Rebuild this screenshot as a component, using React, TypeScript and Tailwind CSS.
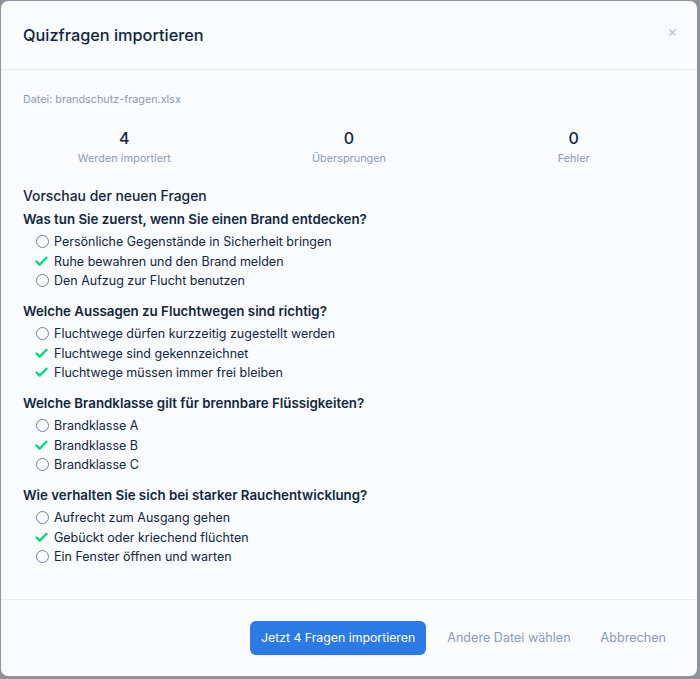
import { Check, X } from "lucide-react";

type Answer = { text: string; correct: boolean };
type Question = { title: string; answers: Answer[] };

const questions: Question[] = [
    {
        title: "Was tun Sie zuerst, wenn Sie einen Brand entdecken?",
        answers: [
            { text: "Persönliche Gegenstände in Sicherheit bringen", correct: false },
            { text: "Ruhe bewahren und den Brand melden", correct: true },
            { text: "Den Aufzug zur Flucht benutzen", correct: false },
        ],
    },
    {
        title: "Welche Aussagen zu Fluchtwegen sind richtig?",
        answers: [
            { text: "Fluchtwege dürfen kurzzeitig zugestellt werden", correct: false },
            { text: "Fluchtwege sind gekennzeichnet", correct: true },
            { text: "Fluchtwege müssen immer frei bleiben", correct: true },
        ],
    },
    {
        title: "Welche Brandklasse gilt für brennbare Flüssigkeiten?",
        answers: [
            { text: "Brandklasse A", correct: false },
            { text: "Brandklasse B", correct: true },
            { text: "Brandklasse C", correct: false },
        ],
    },
    {
        title: "Wie verhalten Sie sich bei starker Rauchentwicklung?",
        answers: [
            { text: "Aufrecht zum Ausgang gehen", correct: false },
            { text: "Gebückt oder kriechend flüchten", correct: true },
            { text: "Ein Fenster öffnen und warten", correct: false },
        ],
    },
];

const stats = [
    { value: 4, label: "Werden importiert" },
    { value: 0, label: "Übersprungen" },
    { value: 0, label: "Fehler" },
];

function AnswerRow({ answer }: { answer: Answer }) {
    return (
        <div className="flex items-center leading-[19.5px] text-[12.5px]">
            <div className="w-[31px] flex justify-end pr-[5px]">
                {answer.correct ? (
                    <Check className="w-[15px] h-[15px] text-[#00d97e]" strokeWidth={3.75} />
                ) : (
                    <div className="w-[13px] h-[13px] rounded-full border-[1.3px] border-[#6e84a3]" />
                )}
            </div>
            <span>{answer.text}</span>
        </div>
    );
}

export default function App() {
    return (
        <div
            className="h-[679px] bg-[#8d939c] pt-px pl-px pr-[3px] pb-[3px]"
            style={{ fontFamily: "Inter, 'Liberation Sans', sans-serif" }}
        >
            <div className="h-full flex flex-col bg-[#f9fbfd] rounded-[7px] text-[#12263f]">
                <div className="h-[69px] shrink-0 flex items-center justify-between pl-[22px] pr-[19px] border-b border-[#e6ecf3]">
                    <div className="text-[16.3px] font-medium">Quizfragen importieren</div>
                    <X className="w-[11px] h-[11px] text-[#b8c2cf] -mt-[6px]" strokeWidth={2.5} />
                </div>

                <div className="flex-1 px-[22px] pt-[21px]">
                    <div className="text-[10.8px] leading-[18px] text-[#8b9bb4]">Datei: brandschutz-fragen.xlsx</div>

                    <div className="grid grid-cols-3 -mx-[11px] mt-[18px]">
                        {stats.map((s) => (
                            <div key={s.label} className="text-center">
                                <div className="text-[16px] leading-[22px] font-medium">{s.value}</div>
                                <div className="text-[10.9px] leading-[18px] text-[#8b9bb4]">{s.label}</div>
                            </div>
                        ))}
                    </div>

                    <div className="mt-[18px] text-[13.9px] leading-[22px] font-medium">Vorschau der neuen Fragen</div>

                    <div className="mt-[2px] flex flex-col gap-[10.5px]">
                        {questions.map((q) => (
                            <div key={q.title}>
                                <div className="text-[13.3px] font-semibold leading-[20px] mb-[3px]">{q.title}</div>
                                {q.answers.map((a) => (
                                    <AnswerRow key={a.text} answer={a} />
                                ))}
                            </div>
                        ))}
                    </div>
                </div>

                <div className="h-[77px] shrink-0 border-t border-[#e6ecf3] flex items-center justify-end pr-[31px] text-[12.6px]">
                    <button className="h-[34px] px-[11px] rounded-[6px] bg-[#2c7be5] text-white text-[12.3px]">
                        Jetzt 4 Fragen importieren
                    </button>
                    <button className="h-[34px] ml-[21px] text-[#8b9bb4]">Andere Datei wählen</button>
                    <button className="h-[34px] ml-[30px] text-[#8b9bb4]">Abbrechen</button>
                </div>
            </div>
        </div>
    );
}
